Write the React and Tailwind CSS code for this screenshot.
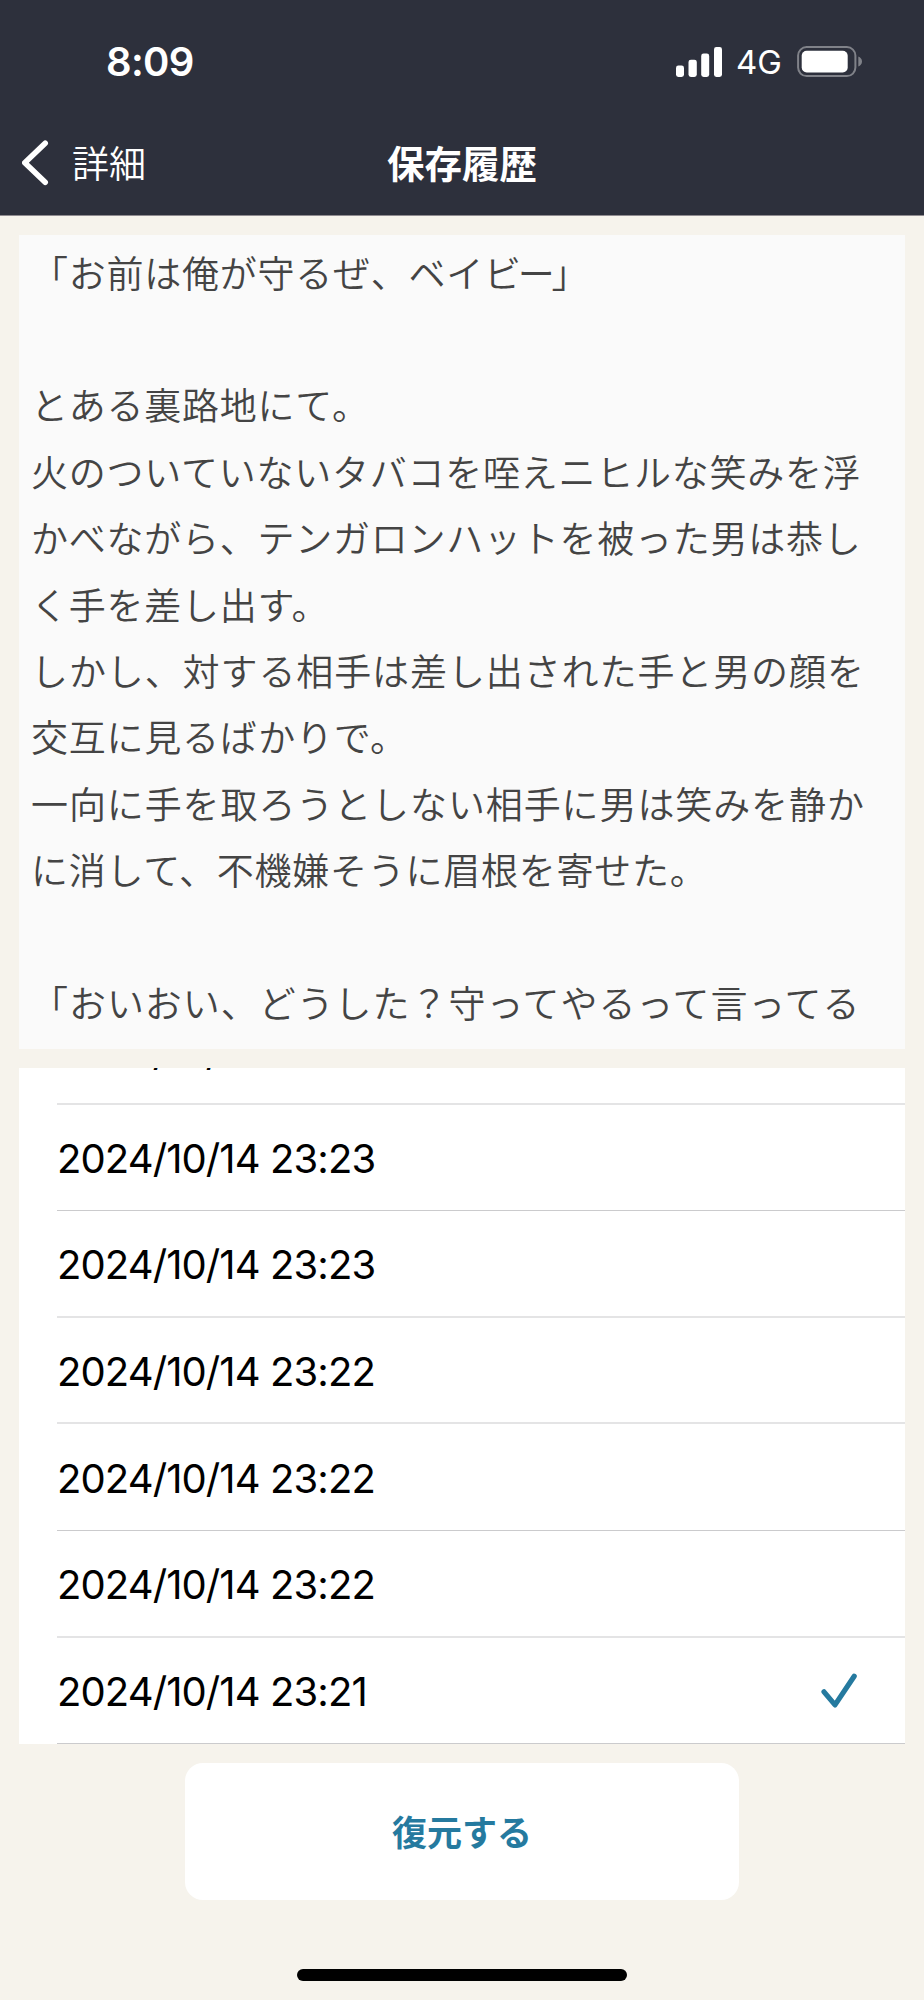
const STORY = [
  {
    text: (
      <>
        「お前は俺が守るぜ、ベイ<span className="tracking-[-3.2px]">ビー</span>」
      </>
    ),
  },
  { text: "" },
  { text: "とある裏路地にて。" },
  { text: "火のついていないタバコを咥えニヒルな笑みを浮" },
  { text: "かべながら、テンガロンハットを被った男は恭し" },
  { text: "く手を差し出す。" },
  { text: "しかし、対する相手は差し出された手と男の顔を", tracking: "tracking-[0.9px]" },
  { text: "交互に見るばかりで。" },
  { text: "一向に手を取ろうとしない相手に男は笑みを静か", tracking: "tracking-[0.9px]" },
  { text: "に消して、不機嫌そうに眉根を寄せた。" },
  { text: "" },
  { text: "「おいおい、どうした？守ってやるって言ってる", tracking: "tracking-[0.95px]" },
];

const ROWS = [
  { time: "23:23", height: "h-[107px]", line: "h-[2px] bg-[#e4e4e5]" },
  { time: "23:23", height: "h-[106px]", line: "h-px bg-[#cbcbcd]" },
  { time: "23:23", height: "h-[107px]", line: "h-[2px] bg-[#e4e4e5]" },
  { time: "23:22", height: "h-[106px]", line: "h-[2px] bg-[#e4e4e5]" },
  { time: "23:22", height: "h-[107px]", line: "h-px bg-[#cbcbcd]" },
  { time: "23:22", height: "h-[107px]", line: "h-[2px] bg-[#e4e4e5]" },
  { time: "23:21", height: "h-[106px]", line: "h-px bg-[#cbcbcd]", selected: true },
];

function StatusBar() {
  return (
    <div className="flex h-[123px] items-center justify-between pl-[106px] pr-[61px] text-white">
      <span className="text-[40px] font-semibold leading-none tracking-[-0.7px] font-['Inter',sans-serif]">8:09</span>
      <div className="flex items-center">
        <svg width="46" height="30" viewBox="0 0 46 30" fill="currentColor">
          <rect x="0" y="18.5" width="8" height="11.5" rx="2.4" />
          <rect x="12.5" y="12.7" width="8.3" height="17.3" rx="2.4" />
          <rect x="25.2" y="6.5" width="8" height="23.5" rx="2.4" />
          <rect x="38" y="0" width="8" height="30" rx="2.4" />
        </svg>
        <span className="ml-[14px] w-[46px] whitespace-nowrap pt-[2px] text-[33px] leading-none font-['Inter',sans-serif]">4G</span>
        <svg className="ml-[15px]" width="66" height="32" viewBox="0 0 66 32">
          <rect x="1.1" y="1.1" width="57.3" height="29" rx="8.5" fill="none" stroke="#808289" strokeWidth="2" />
          <rect x="4.7" y="4.7" width="46" height="21.8" rx="5" fill="#fff" />
          <path d="M61.3 10.6c2.2.8 3.7 2.7 3.7 5s-1.500 4.200-3.700 5z" fill="#808289" />
        </svg>
      </div>
    </div>
  );
}

function NavBar() {
  return (
    <div className="grid h-[92px] grid-cols-3 items-center pb-[12px] text-white font-['Noto_Sans_CJK_JP',sans-serif]">
      <div className="flex items-center pl-[22px]">
        <svg width="27" height="46" viewBox="0 0 27 46" fill="none" stroke="currentColor" strokeWidth="5.600" strokeLinecap="round" strokeLinejoin="round">
          <path d="M23.200 3.300 2.800 22.800l20.400 19.500" />
        </svg>
        <span className="ml-[23px] pb-[1px] text-[37px] font-[350] leading-none">詳細</span>
      </div>
      <h1 className="whitespace-nowrap pb-[2px] text-center text-[37.5px] font-bold leading-none">保存履歴</h1>
    </div>
  );
}

function DateRow({ time, height, line, selected }) {
  return (
    <li className={`flex shrink-0 flex-col pl-[38px] ${height}`}>
      <div className="flex min-h-0 flex-1 items-center justify-between pr-[48px]">
        <span className="pt-[3px]">
          <span className="[font-feature-settings:'calt'_0]">2024/10/14</span> {time}
        </span>
        {selected && (
          <svg width="36" height="36" viewBox="0 0 36 36" fill="none" stroke="#257a9f" strokeWidth="5.200" strokeLinecap="round" strokeLinejoin="round">
            <path d="M3 18.800 14 31.900 33.200 3.200" />
          </svg>
        )}
      </div>
      <div className={`shrink-0 ${line}`} />
    </li>
  );
}

export default function App() {
  return (
    <div className="flex h-[2000px] w-[924px] flex-col overflow-hidden bg-[#f6f3ec]">
      <header className="flex h-[216px] shrink-0 flex-col border-b border-[#8f8b90] bg-[#2d303c]">
        <StatusBar />
        <NavBar />
      </header>

      <section className="mx-[19px] mt-[19px] h-[814px] shrink-0 overflow-hidden bg-[#fafafa] pl-[12px] pt-[3.6px] text-[37px] font-[350] leading-[66.4px] text-[#444444] font-['Noto_Sans_CJK_JP',sans-serif]">
        {STORY.map(({ text, tracking = "tracking-[0.75px]" }, i) => (
          <p key={i} className={`h-[66.4px] whitespace-nowrap ${tracking}`}>
            {text}
          </p>
        ))}
      </section>

      <ul className="mx-[19px] mt-[19px] flex h-[676px] shrink-0 flex-col justify-end overflow-hidden bg-white text-[40px] font-[370] leading-none tracking-[-0.9px] text-black font-['Inter',sans-serif]">
        {ROWS.map((row, i) => (
          <DateRow key={i} {...row} />
        ))}
      </ul>

      <button className="mx-auto mt-[19px] flex h-[137px] w-[554px] shrink-0 items-center justify-center rounded-[18px] bg-white pb-[2px] text-[35px] font-bold leading-none text-[#257a9f] font-['Noto_Sans_CJK_JP',sans-serif]">
        復元する
      </button>

      <div className="mx-auto mt-[69px] h-[12px] w-[330px] shrink-0 rounded-full bg-black" />
    </div>
  );
}
